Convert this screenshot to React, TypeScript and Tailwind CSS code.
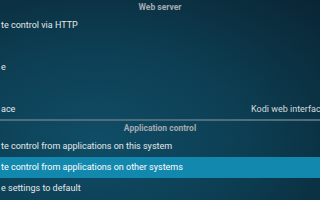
import React from "react";

function Header({ title, h }: { title: string; h: string }) {
  return (
    <div className={`flex items-center justify-center ${h} text-[8.5px] font-bold text-[#a3abaf]`}>
      {title}
    </div>
  );
}

function Row({
  label,
  value,
  active,
}: {
  label: string;
  value?: string;
  active?: boolean;
}) {
  return (
    <div
      className={`flex h-[21px] items-center whitespace-nowrap pl-[1px] text-[9px] ${
        active ? "bg-[#1388ae] text-white" : "text-[#e4e8ea]"
      }`}
    >
      <span>{label}</span>
      {value ? (
        <span className="ml-auto w-[69px] overflow-hidden text-[#d4dadd]">{value}</span>
      ) : null}
    </div>
  );
}

export default function App() {
  return (
    <div
      className="h-[200px] w-[320px] overflow-hidden bg-[radial-gradient(ellipse_at_30%_70%,#0f4d66_0%,#0d3f54_45%,#092533_100%)]"
      style={{ fontFamily: "Roboto, \"Noto Sans\", sans-serif" }}
    >
      <Header title="Web server" h="h-[15px]" />
      <Row label="te control via HTTP" />
      <Row label="" />
      <Row label="e" />
      <Row label="" />
      <Row label="ace" value="Kodi web interface" />
      <div className="-mt-[1px] h-[2px] bg-[#4f6e7d]" />
      <Header title="Application control" h="h-[15px]" />
      <Row label="te control from applications on this system" />
      <Row label="te control from applications on other systems" active />
      <Row label="e settings to default" />
    </div>
  );
}
